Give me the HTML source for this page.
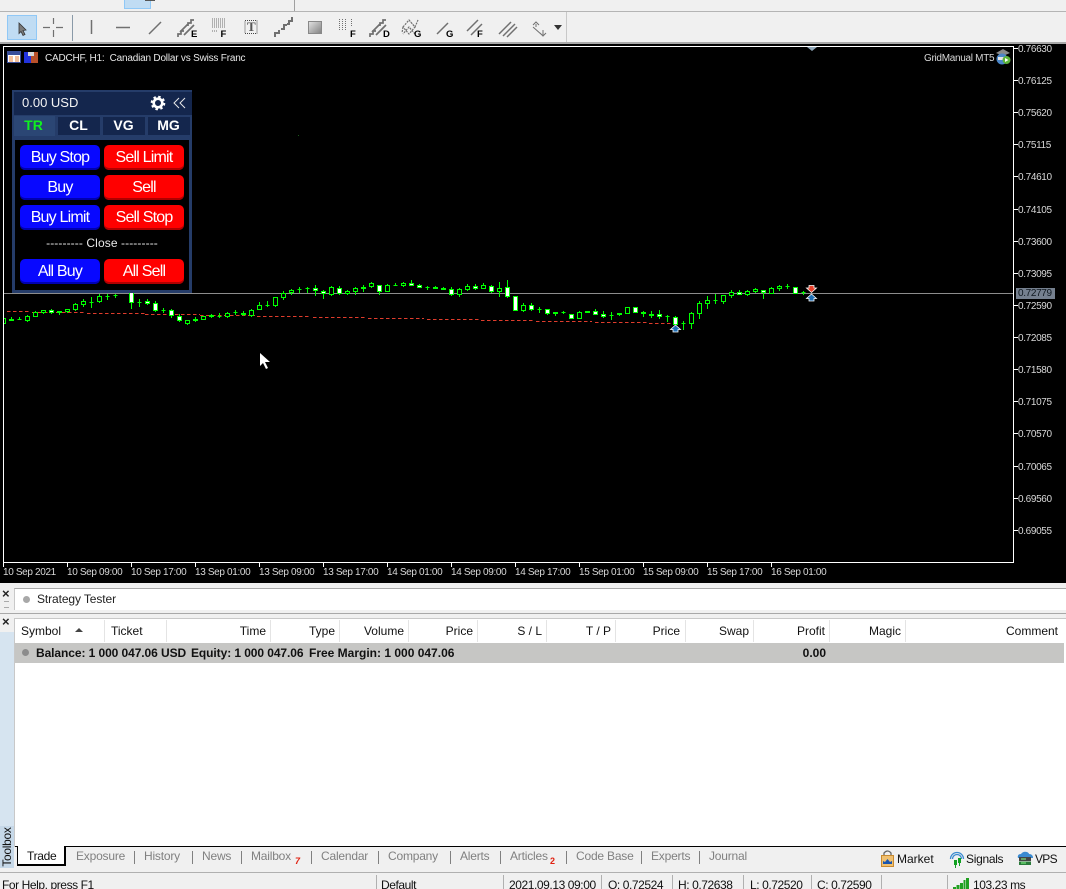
<!DOCTYPE html>
<html><head><meta charset="utf-8"><style>
html,body{margin:0;padding:0;width:1066px;height:889px;overflow:hidden;background:#f0f0f0}
body{position:relative;font-family:"Liberation Sans",sans-serif;font-size:12px;color:#111}
.a{position:absolute;white-space:nowrap;line-height:14px}
.bx{position:absolute}
.ax{position:absolute;color:#fff;font-size:10px;line-height:12px;white-space:nowrap;letter-spacing:-.35px}
.p{left:1018px;color:#d8d8d8}
.t{color:#d8d8d8;top:567px}
.b{position:absolute;width:80px;height:25px;border-radius:5px;color:#fff;text-align:center;font-size:16px;letter-spacing:-.8px;line-height:25px;box-sizing:border-box}
.bl{background:#0808ff;box-shadow:inset 0 -2px 0 #0000b0}
.rd{background:#ff0000;box-shadow:inset 0 -2px 0 #b00000}
.tb{position:absolute;top:117px;height:18px;background:#14264d;color:#fff;font-weight:bold;font-size:14px;line-height:17px;text-align:center}
.h{position:absolute;top:624px;line-height:14px;white-space:nowrap;color:#111}
.d{position:absolute;top:620px;height:22px;width:1px;background:#e4e4e4}
.g{position:absolute;top:849px;line-height:14px;color:#808080;white-space:nowrap;letter-spacing:-.2px}
.s{position:absolute;top:851px;height:13px;width:1px;background:#808080}
.st{position:absolute;top:878px;line-height:14px;white-space:nowrap;color:#111;letter-spacing:-.42px}
.sp{position:absolute;top:875px;height:14px;width:1px;background:#b0b0b0}
</style></head><body>

<div class="bx" style="left:0;top:0;width:1066px;height:44px;background:#f0f0f0"></div>
<div class="bx" style="left:124px;top:0;width:27px;height:9px;background:#c0dcf3;border:1px solid #90c8f6;border-top:0;box-sizing:border-box"></div>
<div class="bx" style="left:145px;top:0;width:10px;height:1px;background:#555"></div>
<div class="bx" style="left:294px;top:0;width:1px;height:11px;background:#a0a0a0"></div>
<div class="bx" style="left:0;top:11px;width:1066px;height:1px;background:#b4b4b4"></div>
<div class="bx" style="left:566px;top:12px;width:1px;height:30px;background:#c8c8c8"></div>
<div class="bx" style="left:0;top:42px;width:1066px;height:2px;background:#a8a8a8"></div>
<div class="bx" style="left:7px;top:15px;width:30px;height:25px;background:#c0dcf3;border:1px solid #90c8f6;box-sizing:border-box"></div>

<svg class="bx" style="left:0;top:0" width="570" height="44" viewBox="0 0 570 44">
<defs><linearGradient id="sq" x1="0" y1="0" x2="1" y2="1"><stop offset="0" stop-color="#e4e4e4"/><stop offset="1" stop-color="#808080"/></linearGradient></defs>
<g fill="none" stroke="#707070" stroke-width="1.500">
<path d="M19 23l7 7-3 .5 2 4-2 1-2-4-2 2z" fill="#7a7a7a" stroke="#333" stroke-width=".8"/>
<path d="M43 27.500h7M56 27.500h7M53.500 18v6M53.500 30v7" stroke-width="1.200"/>
<path d="M72.500 15v26" stroke="#8a9aa8" stroke-width="1"/>
<path d="M91.500 20v14"/>
<path d="M116 27.500h14"/>
<path d="M149 34l12-12"/>
<path d="M178 37v-3h3v-3h3M188 26v-3h3v-3h3M180 32l9-9M184 35l10-10" stroke-width="1.700"/>
<path d="M212 19h13M212 21h13M212 23h13M212 25h13M212 27h13M212 31h6" stroke-dasharray="1 1" stroke-width="1"/>
<path d="M245 20.500h12v13h-12z" stroke-dasharray="1 1" stroke="#444" stroke-width="1"/>
<path d="M275 37v-4h4v-3M281 29h3v-4h3M287 24h2v-3h3v-4" stroke-width="2"/>
<rect x="308.500" y="21.500" width="13" height="12" fill="url(#sq)" stroke="#888" stroke-width="1"/>
<path d="M339.500 19v12M342.500 19v12M345.500 19v12M351.500 19v8" stroke-dasharray="1 1" stroke-width="1"/>
<path d="M370 37v-3h3v-3h3M380 26v-3h3v-3h3M372 32l9-9M376 35l10-10" stroke-width="1.700"/>
<path d="M403 27l6-7 6 7-6 7zM409 20l6 7 3-7M403 27l-1 6M415 34l-6-7-6 7" stroke-dasharray="2 1" stroke-width="1.200"/>
<path d="M437 34l11-11"/>
<path d="M467 31l11-11M471 35l11-11"/>
<path d="M499 34l12-12M503 36l12-12M507 37l10-10"/>
<path d="M533 25l3-3 3 3M536 24v3M533 27l9 8M543 30v5M540 33l3 3 3-3" stroke-width="1"/>
</g>
<path d="M554 25h8l-4 5z" fill="#333"/>
<text x="191" y="37" font-family="Liberation Sans" font-weight="bold" font-size="9.500" fill="#000">E</text>
<text x="220.500" y="37" font-family="Liberation Sans" font-weight="bold" font-size="9.500" fill="#000">F</text>
<text x="247" y="31" font-family="Liberation Serif" font-weight="bold" font-size="13" fill="#555">T</text>
<text x="350" y="37" font-family="Liberation Sans" font-weight="bold" font-size="9.500" fill="#000">F</text>
<text x="383" y="37" font-family="Liberation Sans" font-weight="bold" font-size="9.500" fill="#000">D</text>
<text x="414" y="37" font-family="Liberation Sans" font-weight="bold" font-size="9.500" fill="#000">G</text>
<text x="446" y="37" font-family="Liberation Sans" font-weight="bold" font-size="9.500" fill="#000">G</text>
<text x="477" y="37" font-family="Liberation Sans" font-weight="bold" font-size="9.500" fill="#000">F</text>
</svg>

<!-- chart -->
<div class="bx" style="left:0;top:44px;width:1066px;height:539px;background:#000"></div>
<div class="bx" style="left:3px;top:46px;width:1011px;height:517px;border:1px solid #fff;box-sizing:border-box"></div>

<svg class="bx" style="left:4px;top:47px" width="1009" height="515" viewBox="4 47 1009 515">
<path d="M4 293.500H1013" stroke="#8c8c8c" stroke-width="1"/>
<path d="M298 135.500h1" stroke="#1a5a1a"/>
<path fill="none" stroke="#e03c2c" stroke-width="1" stroke-dasharray="3.500 2.500" d="M7 311.500H30M32 312.500H85M87 313.500H145M145 314.500H200M200 315.500H255M257 316.500H311M313 317.500H367M368 318.500H424M427 319.500H480M481 320.500H535M536 321.500H592M595 322.500H648M649 323.500H675"/>
<path fill="none" stroke="#00ff00" stroke-width="1" d="M11.500 317V321M19.500 317V320M27.500 315V322M35.500 311V317M43.500 310V314M51.500 309V314M59.500 311V315M67.500 309V313M75.500 303V311M83.500 299V307M91.500 297V308M99.500 294V303M107.500 294V300M115.500 294V298M131.500 294V309M139.500 299V307M147.500 299V305M155.500 301V312M163.500 308V313M171.500 309V318M179.500 314V322M187.500 320V325M195.500 317V322M203.500 316V320M211.500 314V318M219.500 313V318M227.500 312V318M235.500 310V315M243.500 311V316M251.500 309V317M259.500 302V310M267.500 301V307M275.500 297V307M283.500 291V300M291.500 289V295M299.500 287V293M307.500 287V293M315.500 285V296M323.500 290V299M331.500 286V296M339.500 286V295M347.500 290V295M355.500 287V295M363.500 285V292M371.500 282V288M379.500 285V295M387.500 284V292M395.500 283V286M403.500 282V287M411.500 280V286M419.500 284V288M427.500 286V290M435.500 286V289M443.500 287V290M451.500 287V296M459.500 288V297M467.500 284V291M475.500 284V290M483.500 283V289M491.500 285V293M499.500 282V297M507.500 280V298M515.500 296V311M523.500 303V312M531.500 303V311M539.500 307V313M547.500 309V315M555.500 312V316M563.500 311V314M571.500 314V319M579.500 311V319M587.500 311V313M595.500 309V315M603.500 311V318M611.500 312V320M619.500 313V316M627.500 307V314M635.500 307V313M643.500 311V317M651.500 311V318M659.500 310V319M667.500 315V322M675.500 316V325M683.500 321V330M691.500 312V329M699.500 301V319M707.500 296V309M715.500 294V304M723.500 295V304M731.500 290V298M739.500 290V295M747.500 290V296M755.500 288V293M763.500 290V299M771.500 287V294M779.500 285V291M787.500 284V289M795.500 287V293M803.500 291V295"/>
<path fill="#000" stroke="#00ff00" stroke-width="1" d="M1.500 318.500h4v5h-4zM25.500 316.500h4v4h-4zM33.500 312.500h4v4h-4zM41.500 310.500h4v2h-4zM65.500 309.500h4v2h-4zM73.500 304.500h4v5h-4zM81.500 301.500h4v3h-4zM97.500 296.500h4v5h-4zM185.500 320.500h4v3h-4zM201.500 316.500h4v3h-4zM225.500 313.500h4v3h-4zM249.500 310.500h4v5h-4zM257.500 305.500h4v4h-4zM273.500 297.500h4v8h-4zM281.500 293.500h4v4h-4zM289.500 290.500h4v2h-4zM329.500 287.500h4v7h-4zM345.500 291.500h4v2h-4zM353.500 288.500h4v3h-4zM369.500 283.500h4v3h-4zM385.500 285.500h4v6h-4zM401.500 283.500h4v2h-4zM457.500 289.500h4v5h-4zM465.500 286.500h4v3h-4zM481.500 285.500h4v3h-4zM497.500 288.500h4v3h-4zM521.500 305.500h4v5h-4zM577.500 312.500h4v6h-4zM625.500 307.500h4v6h-4zM689.500 313.500h4v10h-4zM697.500 303.500h4v10h-4zM705.500 300.500h4v3h-4zM721.500 295.500h4v6h-4zM729.500 292.500h4v3h-4zM745.500 291.500h4v3h-4zM753.500 289.500h4v2h-4zM769.500 288.500h4v5h-4zM777.500 286.500h4v2h-4z"/>
<path fill="#fff" stroke="#00ff00" stroke-width="1" d="M49.500 310.500h4v2h-4zM129.500 292.500h4v10h-4zM145.500 301.500h4v2h-4zM153.500 303.500h4v7h-4zM169.500 310.500h4v5h-4zM177.500 316.500h4v4h-4zM313.500 288.500h4v2h-4zM321.500 291.500h4v2h-4zM337.500 288.500h4v5h-4zM377.500 285.500h4v6h-4zM409.500 283.500h4v2h-4zM417.500 285.500h4v2h-4zM449.500 289.500h4v5h-4zM473.500 286.500h4v2h-4zM489.500 286.500h4v5h-4zM505.500 287.500h4v9h-4zM513.500 296.500h4v14h-4zM529.500 305.500h4v4h-4zM545.500 309.500h4v4h-4zM569.500 314.500h4v4h-4zM593.500 311.500h4v3h-4zM601.500 314.500h4v2h-4zM633.500 307.500h4v5h-4zM657.500 314.500h4v2h-4zM673.500 317.500h4v7h-4zM737.500 292.500h4v2h-4zM761.500 290.500h4v2h-4zM793.500 287.500h4v6h-4z"/>
<path fill="#00ff00" stroke="#00ff00" stroke-width="1" d="M9.500 319.500h4v1h-4zM17.500 319.500h4M57.500 311.500h4v1h-4zM89.500 302.500h4M105.500 296.500h4M113.500 295.500h4M137.500 302.500h4M161.500 310.500h4M193.500 319.500h4v1h-4zM209.500 315.500h4v1h-4zM217.500 316.500h4M233.500 312.500h4M241.500 313.500h4v1h-4zM265.500 305.500h4M297.500 289.500h4M305.500 288.500h4M361.500 287.500h4v1h-4zM393.500 285.500h4M425.500 287.500h4M433.500 287.500h4v1h-4zM441.500 288.500h4v1h-4zM537.500 309.500h4M553.500 312.500h4v1h-4zM561.500 312.500h4M585.500 311.500h4v1h-4zM609.500 315.500h4M617.500 313.500h4v1h-4zM641.500 312.500h4v1h-4zM649.500 314.500h4v1h-4zM665.500 316.500h4M681.500 323.500h4M713.500 300.500h4M785.500 286.500h4M801.500 292.500h4"/>
<!-- arrows -->
<path d="M809 285.500h5v2.500h2.500l-5 4.500-5-4.500h2.500z" fill="#e8402a" stroke="#fff" stroke-width=".8"/>
<path d="M811.500 294l5 4.500h-2.500v2.500h-5v-2.500h-2.500z" fill="#1f6fb5" stroke="#fff" stroke-width=".8"/>
<path d="M675.500 325l5 4.500h-2.500V332h-5v-2.500h-2.500z" fill="#1f6fb5" stroke="#fff" stroke-width=".8"/>
<path d="M260 353v13l3-3 3 6 2-1-3-6h5z" fill="#fff"/>
<path d="M807 47h10l-5 4z" fill="#8fa6b8"/>
</svg>

<!-- Axis ticks -->
<svg class="bx" style="left:1014px;top:44px" width="52" height="530" viewBox="1014 44 52 530">
<path stroke="#fff" d="M1014 48.500h4M1014 80.500h4M1014 112.500h4M1014 144.500h4M1014 176.500h4M1014 209.500h4M1014 241.500h4M1014 273.500h4M1014 305.500h4M1014 337.500h4M1014 369.500h4M1014 401.500h4M1014 433.500h4M1014 466.500h4M1014 498.500h4M1014 530.500h4"/>
</svg>
<svg class="bx" style="left:0;top:560px" width="1020" height="10" viewBox="0 560 1020 10">
<path stroke="#fff" d="M3.500 562v5M67.500 562v5M131.500 562v5M195.500 562v5M259.500 562v5M323.500 562v5M387.500 562v5M451.500 562v5M515.500 562v5M579.500 562v5M643.500 562v5M707.500 562v5M771.500 562v5"/>
</svg>
<div class="ax p" style="top:44px">0.76630</div>
<div class="ax p" style="top:76px">0.76125</div>
<div class="ax p" style="top:108px">0.75620</div>
<div class="ax p" style="top:140px">0.75115</div>
<div class="ax p" style="top:172px">0.74610</div>
<div class="ax p" style="top:205px">0.74105</div>
<div class="ax p" style="top:237px">0.73600</div>
<div class="ax p" style="top:269px">0.73095</div>
<div class="bx" style="left:1016px;top:288px;width:39px;height:11px;background:#75808f"></div>
<div class="ax" style="left:1018px;top:288px;color:#101820">0.72779</div>
<div class="ax p" style="top:301px">0.72590</div>
<div class="ax p" style="top:333px">0.72085</div>
<div class="ax p" style="top:365px">0.71580</div>
<div class="ax p" style="top:397px">0.71075</div>
<div class="ax p" style="top:429px">0.70570</div>
<div class="ax p" style="top:462px">0.70065</div>
<div class="ax p" style="top:494px">0.69560</div>
<div class="ax p" style="top:526px">0.69055</div>
<div class="ax t" style="left:3px">10 Sep 2021</div>
<div class="ax t" style="left:67px">10 Sep 09:00</div>
<div class="ax t" style="left:131px">10 Sep 17:00</div>
<div class="ax t" style="left:195px">13 Sep 01:00</div>
<div class="ax t" style="left:259px">13 Sep 09:00</div>
<div class="ax t" style="left:323px">13 Sep 17:00</div>
<div class="ax t" style="left:387px">14 Sep 01:00</div>
<div class="ax t" style="left:451px">14 Sep 09:00</div>
<div class="ax t" style="left:515px">14 Sep 17:00</div>
<div class="ax t" style="left:579px">15 Sep 01:00</div>
<div class="ax t" style="left:643px">15 Sep 09:00</div>
<div class="ax t" style="left:707px">15 Sep 17:00</div>
<div class="ax t" style="left:771px">16 Sep 01:00</div>

<!-- chart title -->
<svg class="bx" style="left:7px;top:51px" width="32" height="13" viewBox="0 0 32 13">
<rect x=".5" y=".5" width="13" height="11" fill="#fff" stroke="#3a4f9a"/><rect x="1" y="1" width="12" height="3" fill="#3a4f9a"/>
<path d="M2 6h4M2 8h4M2 10h4M8 6h4M8 8h4M8 10h4" stroke="#e8803a"/>
<rect x="17" y="1" width="7" height="11" fill="#2233dd"/><rect x="24" y="1" width="7" height="11" fill="#b8502a"/><rect x="21" y="1" width="6" height="4" fill="#d8d8d8"/>
</svg>
<div class="ax" style="left:45px;top:53px;color:#e8e8e8;letter-spacing:-.2px">CADCHF, H1:&nbsp; Canadian Dollar vs Swiss Franc</div>
<div class="ax" style="left:924px;top:53px;color:#d8d8d8;letter-spacing:-.3px">GridManual MT5</div>
<svg class="bx" style="left:995px;top:48px" width="17" height="18" viewBox="0 0 17 18">
<path d="M1 5l7-4 7 4-7 3z" fill="#8a8a8a"/><circle cx="7" cy="11" r="5.500" fill="#4b86c8"/><path d="M3 9h8v3H3z" fill="#e4e4e4"/><circle cx="11.500" cy="12" r="4" fill="#5db43a"/><path d="M10 10l3.500 2-3.500 2z" fill="#fff"/>
</svg>

<!-- EA panel -->
<div class="bx" style="left:12px;top:90px;width:180px;height:203px;background:#253c69"></div>
<div class="bx" style="left:14px;top:92px;width:178px;height:23px;background:#14264d"></div>
<div class="a" style="left:22px;top:96px;color:#f4f4f4;font-size:13px">0.00 USD</div>
<svg class="bx" style="left:150px;top:95px" width="38" height="16" viewBox="0 0 38 16">
<circle cx="8" cy="8" r="4.300" fill="none" stroke="#fff" stroke-width="2.600"/>
<circle cx="8" cy="8" r="6.300" fill="none" stroke="#fff" stroke-width="2" stroke-dasharray="2.500 2.450"/>
<path d="M29 3l-5 5 5 5M35 3l-5 5 5 5" fill="none" stroke="#e8e8e8" stroke-width="1"/>
</svg>
<div class="bx" style="left:14px;top:116px;width:41px;height:20px;background:#2b4674"></div>
<div class="tb" style="left:13px;width:41px;background:transparent;color:#10f020">TR</div>
<div class="tb" style="left:58px;width:42px;padding-right:1px;box-sizing:border-box">CL</div>
<div class="tb" style="left:103px;width:42px;padding-right:1px;box-sizing:border-box">VG</div>
<div class="tb" style="left:148px;width:42px;padding-right:1px;box-sizing:border-box">MG</div>
<div class="bx" style="left:15px;top:140px;width:174px;height:150px;background:#000"></div>
<div class="b bl" style="left:20px;top:145px">Buy Stop</div>
<div class="b rd" style="left:104px;top:145px">Sell Limit</div>
<div class="b bl" style="left:20px;top:175px">Buy</div>
<div class="b rd" style="left:104px;top:175px">Sell</div>
<div class="b bl" style="left:20px;top:205px">Buy Limit</div>
<div class="b rd" style="left:104px;top:205px">Sell Stop</div>
<div class="a" style="left:15px;width:174px;top:236px;text-align:center;color:#e8e8e8;font-size:12px;letter-spacing:.1px">--------- Close ---------</div>
<div class="b bl" style="left:20px;top:259px">All Buy</div>
<div class="b rd" style="left:104px;top:259px">All Sell</div>

<!-- Strategy tester -->
<div class="bx" style="left:0;top:583px;width:1066px;height:34px;background:#f0f0f0"></div>
<div class="bx" style="left:14px;top:588px;width:1052px;height:22px;background:#fff;border-top:1px solid #a8a8a8;border-left:1px solid #c8c8c8;box-sizing:border-box"></div>
<div class="bx" style="left:0;top:613px;width:1066px;height:1px;background:#a8a8a8"></div>
<div class="a" style="left:2px;top:587px;font-weight:bold;font-size:13px;color:#222">×</div>
<div class="bx" style="left:4px;top:601px;width:5px;height:5px;border-top:1px solid #aaa;border-bottom:1px solid #aaa"></div>
<div class="bx" style="left:23px;top:596px;width:7px;height:7px;border-radius:50%;background:#a8a8a8"></div>
<div class="a" style="left:37px;top:592px;color:#222;letter-spacing:-.1px">Strategy Tester</div>

<div class="bx" style="left:0;top:617px;width:14px;height:256px;background:#f0f0f0"></div>
<div class="bx" style="left:0;top:632px;width:14px;height:215px;background:#d6e4f0"></div>
<div class="a" style="left:2px;top:615px;font-weight:bold;font-size:13px;color:#222">×</div>
<div class="bx" style="left:14px;top:618px;width:1052px;height:229px;background:#fff;border-left:1px solid #c8c8c8;border-top:1px solid #c8c8c8;box-sizing:border-box"></div>
<div class="h" style="left:21px">Symbol</div>
<svg class="bx" style="left:74px;top:627px" width="10" height="6"><path d="M1 5h8L5 1z" fill="#444"/></svg>
<div class="d" style="left:104px"></div>
<div class="h" style="left:111px">Ticket</div>
<div class="d" style="left:166px"></div>
<div class="h" style="right:800px">Time</div>
<div class="d" style="left:270px"></div>
<div class="h" style="right:731px">Type</div>
<div class="d" style="left:339px"></div>
<div class="h" style="right:662px">Volume</div>
<div class="d" style="left:408px"></div>
<div class="h" style="right:593px">Price</div>
<div class="d" style="left:477px"></div>
<div class="h" style="right:524px">S / L</div>
<div class="d" style="left:546px"></div>
<div class="h" style="right:455px">T / P</div>
<div class="d" style="left:615px"></div>
<div class="h" style="right:386px">Price</div>
<div class="d" style="left:685px"></div>
<div class="h" style="right:317px">Swap</div>
<div class="d" style="left:753px"></div>
<div class="h" style="right:241px">Profit</div>
<div class="d" style="left:829px"></div>
<div class="h" style="right:165px">Magic</div>
<div class="d" style="left:905px"></div>
<div class="h" style="right:8px">Comment</div>

<div class="bx" style="left:15px;top:643px;width:1049px;height:20px;background:#c6c6c4"></div>
<div class="bx" style="left:22px;top:649px;width:7px;height:7px;border-radius:50%;background:#8c8c8c"></div>
<div class="a" style="left:36px;top:646px;font-weight:bold;letter-spacing:-.08px">Balance: 1 000 047.06 USD</div>
<div class="a" style="left:191px;top:646px;font-weight:bold;letter-spacing:-.08px">Equity: 1 000 047.06</div>
<div class="a" style="left:309px;top:646px;font-weight:bold">Free Margin: 1 000 047.06</div>
<div class="a" style="right:240px;top:646px;font-weight:bold">0.00</div>

<!-- Toolbox label -->
<div class="bx" style="left:0;top:847px;width:14px;height:26px;background:#f0f0f0"></div>
<div class="bx" style="left:0;top:826px;width:14px;height:42px;background:#c6d8e8"></div>
<div class="a" style="left:-13px;top:840px;width:40px;text-align:center;transform:rotate(-90deg);color:#111;letter-spacing:-.3px">Toolbox</div>

<!-- Tabs -->
<div class="bx" style="left:14px;top:847px;width:1052px;height:25px;background:#f0f0f0"></div>
<div class="bx" style="left:15px;top:846px;width:1051px;height:1px;background:#000"></div>
<div class="bx" style="left:17px;top:846px;width:49px;height:20px;background:#fff;border:1px solid #000;border-top:0;border-bottom-width:2px;border-right-width:2px;box-sizing:border-box"></div>
<div class="a" style="left:27px;top:849px;color:#111;letter-spacing:-.3px">Trade</div>
<div class="g" style="left:76px">Exposure</div><div class="s" style="left:134px"></div>
<div class="g" style="left:144px">History</div><div class="s" style="left:192px"></div>
<div class="g" style="left:202px">News</div><div class="s" style="left:241px"></div>
<div class="g" style="left:251px">Mailbox</div>
<div class="a" style="left:295px;top:854px;color:#e02010;font-weight:bold;font-size:9px;font-style:italic">7</div>
<div class="s" style="left:311px"></div>
<div class="g" style="left:321px">Calendar</div><div class="s" style="left:378px"></div>
<div class="g" style="left:388px">Company</div><div class="s" style="left:450px"></div>
<div class="g" style="left:460px">Alerts</div><div class="s" style="left:500px"></div>
<div class="g" style="left:510px">Articles</div>
<div class="a" style="left:550px;top:854px;color:#e02010;font-weight:bold;font-size:9px">2</div>
<div class="s" style="left:566px"></div>
<div class="g" style="left:576px">Code Base</div><div class="s" style="left:641px"></div>
<div class="g" style="left:651px">Experts</div><div class="s" style="left:699px"></div>
<div class="g" style="left:709px">Journal</div>

<svg class="bx" style="left:880px;top:850px" width="15" height="17" viewBox="0 0 15 17">
<path d="M4 6V3q3.500-4 7 0v3" fill="none" stroke="#666" stroke-width="1.300"/>
<rect x="1.500" y="5.500" width="12" height="11" fill="#f0c070" stroke="#c88a30"/><path d="M3 14v-3l2 1 2.500-3 2.500 3 2-1v3z" fill="#1a56b0"/>
</svg>
<div class="a" style="left:897px;top:852px;color:#111">Market</div>
<svg class="bx" style="left:949px;top:850px" width="16" height="18" viewBox="0 0 16 18">
<path d="M1.500 9a6.500 6.500 0 0 1 13 0M3.500 9a4.500 4.500 0 0 1 9 0" fill="none" stroke="#3a8ad0" stroke-width="1.300"/><path d="M5 10h3v5H5zM9 8h3v5H9z" fill="#10a020"/><path d="M6.500 15v3M10.500 13v3" stroke="#10a020"/>
</svg>
<div class="a" style="left:966px;top:852px;color:#111;letter-spacing:-.3px">Signals</div>
<svg class="bx" style="left:1016px;top:850px" width="18" height="17" viewBox="0 0 18 17">
<path d="M2 8q-1-4 3-4 2-3 6-2 2 1 2 2 4 0 4 4z" fill="#3a8ad0"/><rect x="3" y="7" width="12" height="4" fill="#444"/><rect x="3" y="11.500" width="12" height="3.500" fill="#2a7a3a"/><path d="M5 9h5M5 13h5" stroke="#8f8"/>
</svg>
<div class="a" style="left:1035px;top:852px;color:#111;letter-spacing:-.7px">VPS</div>

<!-- Status -->
<div class="bx" style="left:0;top:872px;width:1066px;height:17px;background:#f0f0f0;border-top:1px solid #b0b0b0;box-sizing:border-box"></div>
<div class="st" style="left:2px">For Help, press F1</div>
<div class="sp" style="left:376px"></div><div class="st" style="left:381px">Default</div>
<div class="sp" style="left:503px"></div><div class="st" style="left:509px">2021.09.13 09:00</div>
<div class="sp" style="left:601px"></div><div class="st" style="left:608px">O: 0.72524</div>
<div class="sp" style="left:672px"></div><div class="st" style="left:678px">H: 0.72638</div>
<div class="sp" style="left:743px"></div><div class="st" style="left:750px">L: 0.72520</div>
<div class="sp" style="left:811px"></div><div class="st" style="left:817px">C: 0.72590</div>
<div class="sp" style="left:881px"></div>
<div class="sp" style="left:947px"></div>
<svg class="bx" style="left:953px;top:877px" width="16" height="12" viewBox="0 0 16 12">
<path d="M0 10h3v2H0zM3.500 8h3v4h-3zM7 6h3v6H7zM10.500 3h2v9h-2zM13 1h3v11h-3z" fill="#20a020"/>
</svg>
<div class="st" style="left:973px">103.23 ms</div>
</body></html>
